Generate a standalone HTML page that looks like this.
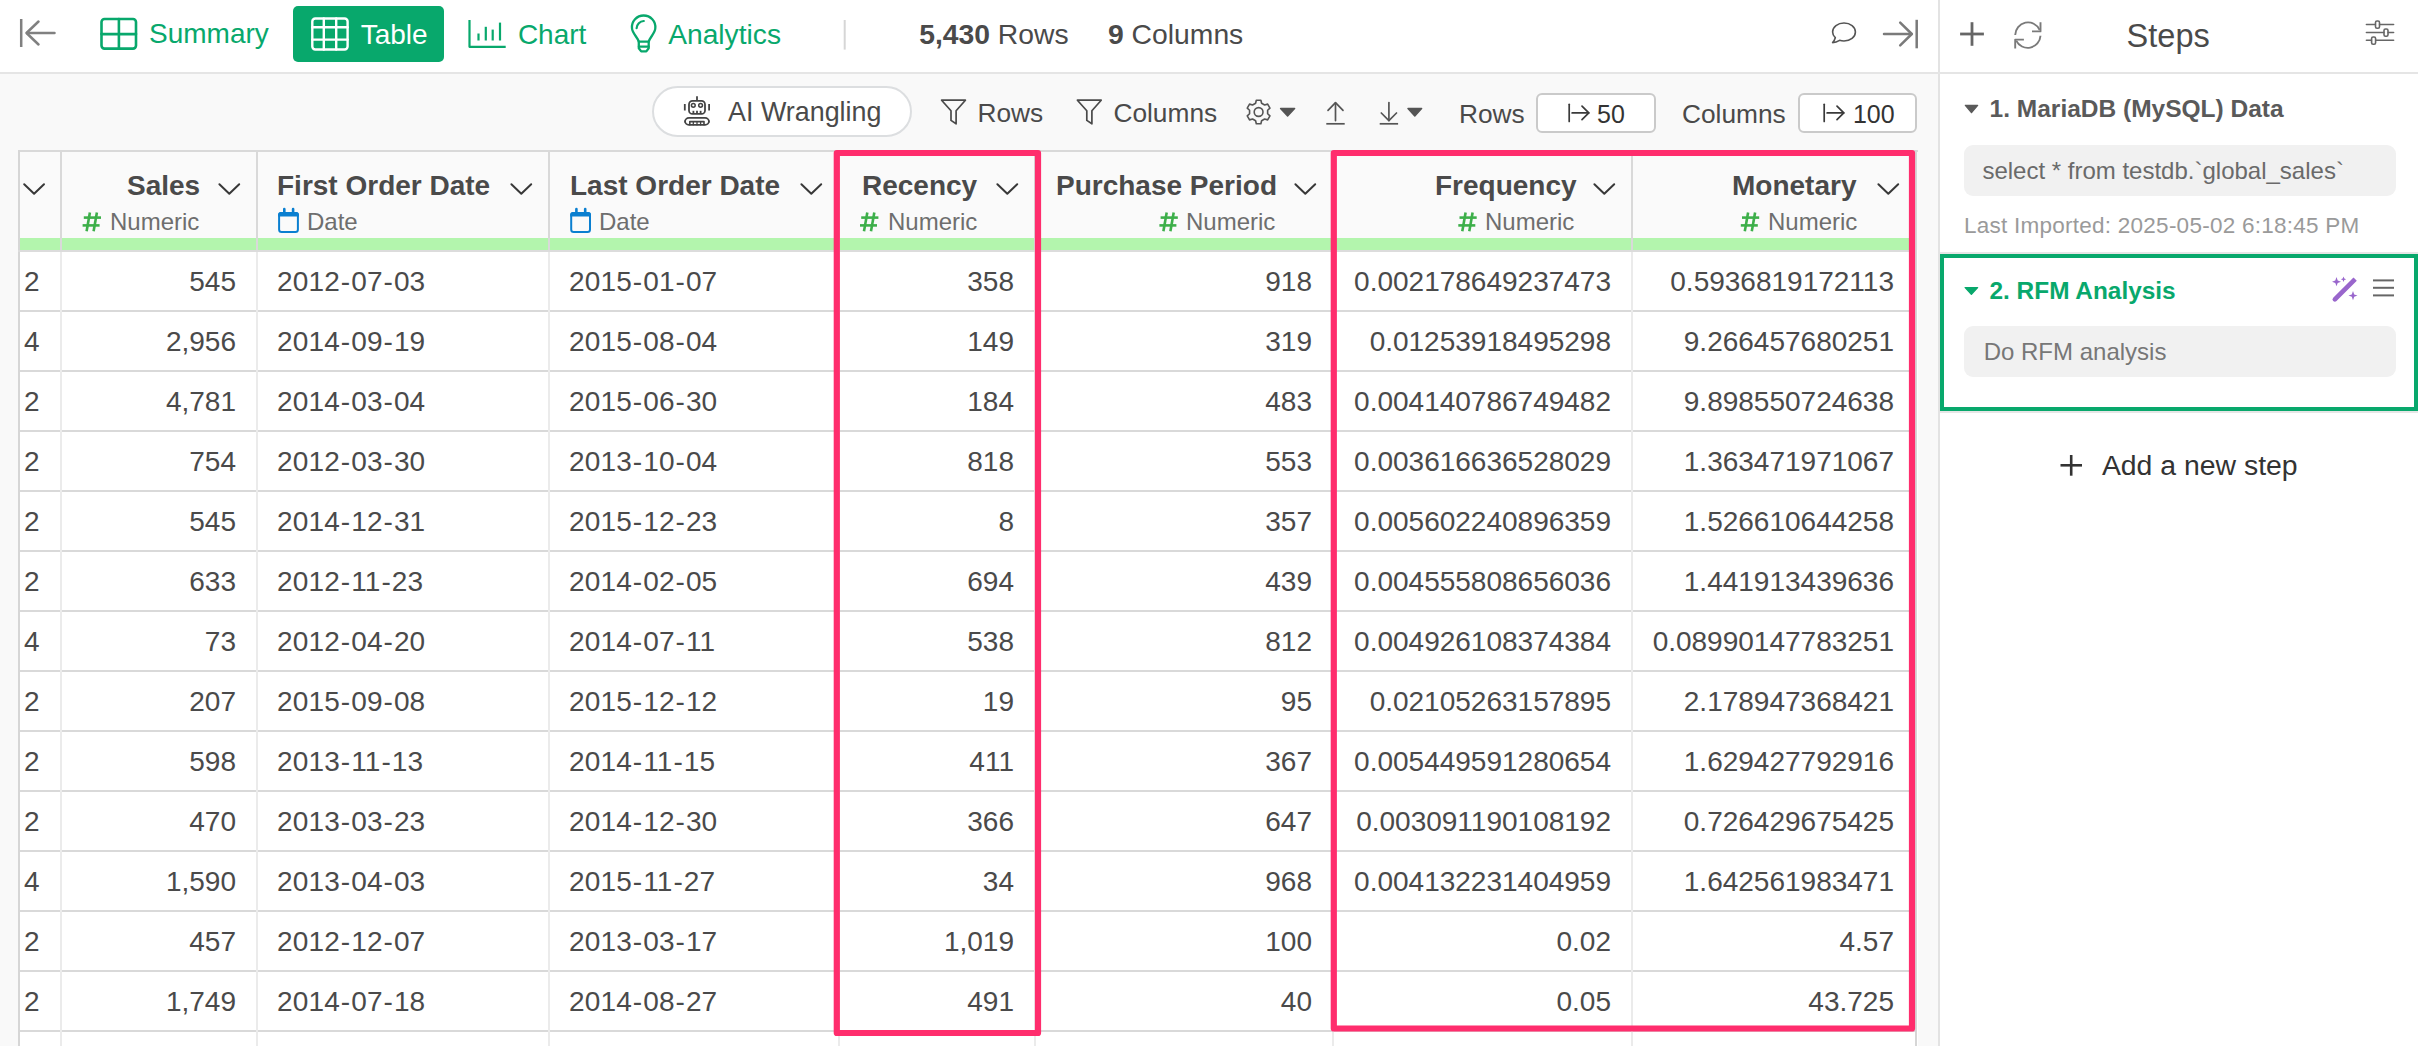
<!DOCTYPE html><html><head><meta charset="utf-8"><style>*{margin:0;padding:0;box-sizing:border-box}
html,body{width:2418px;height:1046px;overflow:hidden;background:#f9f9f9;font-family:"Liberation Sans",sans-serif;color:#4a4a4a;position:relative}
.t{position:absolute;line-height:1;white-space:nowrap}
.topbar{position:absolute;left:0;top:0;width:1938px;height:72px;background:#fff}
.topline{position:absolute;left:0;top:72px;width:2418px;height:2px;background:#e5e5e5}
.panel{position:absolute;left:1940px;top:0;width:478px;height:1046px;background:#fff}
.divider{position:absolute;left:1938px;top:0;width:2px;height:1046px;background:#e3e3e3}
.tbtn{position:absolute;left:293px;top:6px;width:151px;height:56px;background:#08a86c;border-radius:5px}
.tbl{position:absolute;left:0;top:0}
.hbg{position:absolute;left:18px;top:150px;width:1900px;height:88px;background:#fafafa;border-top:2px solid #d9d9d9}
.gbar{position:absolute;left:18px;top:238px;width:1897px;height:12px;background:#b3f5ad}
.rowbg{position:absolute;left:18px;top:250px;width:1900px;height:796px;background:#fff}
.rowline{position:absolute;left:18px;width:1897px;height:2px;background:#e2e2e2}
.vline{position:absolute;top:150px;width:2px;height:896px;background:#e6e6e6}
.c{position:absolute;font-size:28px;line-height:60px;height:60px;white-space:nowrap;color:#4a4a4a}
.c.r{text-align:right}
.ht{position:absolute;font-size:28px;font-weight:bold;line-height:1;white-space:nowrap;color:#4a4a4a}
.hs{position:absolute;font-size:24px;line-height:1;white-space:nowrap;color:#6e6e6e}
.pill{position:absolute;left:652px;top:86px;width:260px;height:51px;border:2px solid #dcdee0;border-radius:26px;background:#fff}
.inp{position:absolute;top:93px;height:40px;border:2px solid #cacaca;border-radius:6px;background:#fff}
.gbox{position:absolute;left:1964px;width:432px;background:#f1f1f1;border-radius:9px}
.stepbox{position:absolute;left:1940px;top:254px;width:478px;height:157px;border:4px solid #08a86c}
.icons{position:absolute;left:0;top:0;width:2418px;height:1046px;pointer-events:none}
.hy{margin:0 0.9px}
.rowline{background:#d9d9d9}
</style></head><body>
<div class="topbar"></div>
<div class="panel"></div>
<div class="divider"></div>
<div class="topline"></div>
<div class="tbtn"></div>
<div class="pill"></div>
<div class="inp" style="left:1536px;width:120px"></div>
<div class="inp" style="left:1798px;width:119px"></div>
<div class="rowbg"></div>

<div class="tbl">
<div class="hbg"></div>
<div class="gbar"></div>
<div class="rowline" style="top:310px"></div>
<div class="rowline" style="top:370px"></div>
<div class="rowline" style="top:430px"></div>
<div class="rowline" style="top:490px"></div>
<div class="rowline" style="top:550px"></div>
<div class="rowline" style="top:610px"></div>
<div class="rowline" style="top:670px"></div>
<div class="rowline" style="top:730px"></div>
<div class="rowline" style="top:790px"></div>
<div class="rowline" style="top:850px"></div>
<div class="rowline" style="top:910px"></div>
<div class="rowline" style="top:970px"></div>
<div class="rowline" style="top:1030px"></div>

<div class="c l" style="left:24px;top:251.5px">2</div>
<div class="c r" style="left:60px;width:176px;top:251.5px">545</div>
<div class="c l" style="left:277px;top:251.5px;letter-spacing:0.15px">2012<span class="hy">-</span>07<span class="hy">-</span>03</div>
<div class="c l" style="left:569px;top:251.5px;letter-spacing:0.15px">2015<span class="hy">-</span>01<span class="hy">-</span>07</div>
<div class="c r" style="left:838px;width:176px;top:251.5px">358</div>
<div class="c r" style="left:1034px;width:278px;top:251.5px">918</div>
<div class="c r" style="left:1332px;width:279px;top:251.5px">0.002178649237473</div>
<div class="c r" style="left:1631px;width:263px;top:251.5px">0.5936819172113</div>
<div class="c l" style="left:24px;top:311.5px">4</div>
<div class="c r" style="left:60px;width:176px;top:311.5px">2,956</div>
<div class="c l" style="left:277px;top:311.5px;letter-spacing:0.15px">2014<span class="hy">-</span>09<span class="hy">-</span>19</div>
<div class="c l" style="left:569px;top:311.5px;letter-spacing:0.15px">2015<span class="hy">-</span>08<span class="hy">-</span>04</div>
<div class="c r" style="left:838px;width:176px;top:311.5px">149</div>
<div class="c r" style="left:1034px;width:278px;top:311.5px">319</div>
<div class="c r" style="left:1332px;width:279px;top:311.5px">0.01253918495298</div>
<div class="c r" style="left:1631px;width:263px;top:311.5px">9.266457680251</div>
<div class="c l" style="left:24px;top:371.5px">2</div>
<div class="c r" style="left:60px;width:176px;top:371.5px">4,781</div>
<div class="c l" style="left:277px;top:371.5px;letter-spacing:0.15px">2014<span class="hy">-</span>03<span class="hy">-</span>04</div>
<div class="c l" style="left:569px;top:371.5px;letter-spacing:0.15px">2015<span class="hy">-</span>06<span class="hy">-</span>30</div>
<div class="c r" style="left:838px;width:176px;top:371.5px">184</div>
<div class="c r" style="left:1034px;width:278px;top:371.5px">483</div>
<div class="c r" style="left:1332px;width:279px;top:371.5px">0.004140786749482</div>
<div class="c r" style="left:1631px;width:263px;top:371.5px">9.898550724638</div>
<div class="c l" style="left:24px;top:431.5px">2</div>
<div class="c r" style="left:60px;width:176px;top:431.5px">754</div>
<div class="c l" style="left:277px;top:431.5px;letter-spacing:0.15px">2012<span class="hy">-</span>03<span class="hy">-</span>30</div>
<div class="c l" style="left:569px;top:431.5px;letter-spacing:0.15px">2013<span class="hy">-</span>10<span class="hy">-</span>04</div>
<div class="c r" style="left:838px;width:176px;top:431.5px">818</div>
<div class="c r" style="left:1034px;width:278px;top:431.5px">553</div>
<div class="c r" style="left:1332px;width:279px;top:431.5px">0.003616636528029</div>
<div class="c r" style="left:1631px;width:263px;top:431.5px">1.363471971067</div>
<div class="c l" style="left:24px;top:491.5px">2</div>
<div class="c r" style="left:60px;width:176px;top:491.5px">545</div>
<div class="c l" style="left:277px;top:491.5px;letter-spacing:0.15px">2014<span class="hy">-</span>12<span class="hy">-</span>31</div>
<div class="c l" style="left:569px;top:491.5px;letter-spacing:0.15px">2015<span class="hy">-</span>12<span class="hy">-</span>23</div>
<div class="c r" style="left:838px;width:176px;top:491.5px">8</div>
<div class="c r" style="left:1034px;width:278px;top:491.5px">357</div>
<div class="c r" style="left:1332px;width:279px;top:491.5px">0.005602240896359</div>
<div class="c r" style="left:1631px;width:263px;top:491.5px">1.526610644258</div>
<div class="c l" style="left:24px;top:551.5px">2</div>
<div class="c r" style="left:60px;width:176px;top:551.5px">633</div>
<div class="c l" style="left:277px;top:551.5px;letter-spacing:0.15px">2012<span class="hy">-</span>11<span class="hy">-</span>23</div>
<div class="c l" style="left:569px;top:551.5px;letter-spacing:0.15px">2014<span class="hy">-</span>02<span class="hy">-</span>05</div>
<div class="c r" style="left:838px;width:176px;top:551.5px">694</div>
<div class="c r" style="left:1034px;width:278px;top:551.5px">439</div>
<div class="c r" style="left:1332px;width:279px;top:551.5px">0.004555808656036</div>
<div class="c r" style="left:1631px;width:263px;top:551.5px">1.441913439636</div>
<div class="c l" style="left:24px;top:611.5px">4</div>
<div class="c r" style="left:60px;width:176px;top:611.5px">73</div>
<div class="c l" style="left:277px;top:611.5px;letter-spacing:0.15px">2012<span class="hy">-</span>04<span class="hy">-</span>20</div>
<div class="c l" style="left:569px;top:611.5px;letter-spacing:0.15px">2014<span class="hy">-</span>07<span class="hy">-</span>11</div>
<div class="c r" style="left:838px;width:176px;top:611.5px">538</div>
<div class="c r" style="left:1034px;width:278px;top:611.5px">812</div>
<div class="c r" style="left:1332px;width:279px;top:611.5px">0.004926108374384</div>
<div class="c r" style="left:1631px;width:263px;top:611.5px">0.08990147783251</div>
<div class="c l" style="left:24px;top:671.5px">2</div>
<div class="c r" style="left:60px;width:176px;top:671.5px">207</div>
<div class="c l" style="left:277px;top:671.5px;letter-spacing:0.15px">2015<span class="hy">-</span>09<span class="hy">-</span>08</div>
<div class="c l" style="left:569px;top:671.5px;letter-spacing:0.15px">2015<span class="hy">-</span>12<span class="hy">-</span>12</div>
<div class="c r" style="left:838px;width:176px;top:671.5px">19</div>
<div class="c r" style="left:1034px;width:278px;top:671.5px">95</div>
<div class="c r" style="left:1332px;width:279px;top:671.5px">0.02105263157895</div>
<div class="c r" style="left:1631px;width:263px;top:671.5px">2.178947368421</div>
<div class="c l" style="left:24px;top:731.5px">2</div>
<div class="c r" style="left:60px;width:176px;top:731.5px">598</div>
<div class="c l" style="left:277px;top:731.5px;letter-spacing:0.15px">2013<span class="hy">-</span>11<span class="hy">-</span>13</div>
<div class="c l" style="left:569px;top:731.5px;letter-spacing:0.15px">2014<span class="hy">-</span>11<span class="hy">-</span>15</div>
<div class="c r" style="left:838px;width:176px;top:731.5px">411</div>
<div class="c r" style="left:1034px;width:278px;top:731.5px">367</div>
<div class="c r" style="left:1332px;width:279px;top:731.5px">0.005449591280654</div>
<div class="c r" style="left:1631px;width:263px;top:731.5px">1.629427792916</div>
<div class="c l" style="left:24px;top:791.5px">2</div>
<div class="c r" style="left:60px;width:176px;top:791.5px">470</div>
<div class="c l" style="left:277px;top:791.5px;letter-spacing:0.15px">2013<span class="hy">-</span>03<span class="hy">-</span>23</div>
<div class="c l" style="left:569px;top:791.5px;letter-spacing:0.15px">2014<span class="hy">-</span>12<span class="hy">-</span>30</div>
<div class="c r" style="left:838px;width:176px;top:791.5px">366</div>
<div class="c r" style="left:1034px;width:278px;top:791.5px">647</div>
<div class="c r" style="left:1332px;width:279px;top:791.5px">0.003091190108192</div>
<div class="c r" style="left:1631px;width:263px;top:791.5px">0.726429675425</div>
<div class="c l" style="left:24px;top:851.5px">4</div>
<div class="c r" style="left:60px;width:176px;top:851.5px">1,590</div>
<div class="c l" style="left:277px;top:851.5px;letter-spacing:0.15px">2013<span class="hy">-</span>04<span class="hy">-</span>03</div>
<div class="c l" style="left:569px;top:851.5px;letter-spacing:0.15px">2015<span class="hy">-</span>11<span class="hy">-</span>27</div>
<div class="c r" style="left:838px;width:176px;top:851.5px">34</div>
<div class="c r" style="left:1034px;width:278px;top:851.5px">968</div>
<div class="c r" style="left:1332px;width:279px;top:851.5px">0.004132231404959</div>
<div class="c r" style="left:1631px;width:263px;top:851.5px">1.642561983471</div>
<div class="c l" style="left:24px;top:911.5px">2</div>
<div class="c r" style="left:60px;width:176px;top:911.5px">457</div>
<div class="c l" style="left:277px;top:911.5px;letter-spacing:0.15px">2012<span class="hy">-</span>12<span class="hy">-</span>07</div>
<div class="c l" style="left:569px;top:911.5px;letter-spacing:0.15px">2013<span class="hy">-</span>03<span class="hy">-</span>17</div>
<div class="c r" style="left:838px;width:176px;top:911.5px">1,019</div>
<div class="c r" style="left:1034px;width:278px;top:911.5px">100</div>
<div class="c r" style="left:1332px;width:279px;top:911.5px">0.02</div>
<div class="c r" style="left:1631px;width:263px;top:911.5px">4.57</div>
<div class="c l" style="left:24px;top:971.5px">2</div>
<div class="c r" style="left:60px;width:176px;top:971.5px">1,749</div>
<div class="c l" style="left:277px;top:971.5px;letter-spacing:0.15px">2014<span class="hy">-</span>07<span class="hy">-</span>18</div>
<div class="c l" style="left:569px;top:971.5px;letter-spacing:0.15px">2014<span class="hy">-</span>08<span class="hy">-</span>27</div>
<div class="c r" style="left:838px;width:176px;top:971.5px">491</div>
<div class="c r" style="left:1034px;width:278px;top:971.5px">40</div>
<div class="c r" style="left:1332px;width:279px;top:971.5px">0.05</div>
<div class="c r" style="left:1631px;width:263px;top:971.5px">43.725</div>
<div class="vline" style="left:18px;top:150px;height:896px;background:#d6d6d6"></div>
<div class="vline" style="left:60px;top:150px;height:100px;background:#d9d9d9"></div>
<div class="vline" style="left:60px;top:250px;height:796px;background:#ebebeb"></div>
<div class="vline" style="left:256px;top:150px;height:100px;background:#d9d9d9"></div>
<div class="vline" style="left:256px;top:250px;height:796px;background:#ebebeb"></div>
<div class="vline" style="left:548px;top:150px;height:100px;background:#d9d9d9"></div>
<div class="vline" style="left:548px;top:250px;height:796px;background:#ebebeb"></div>
<div class="vline" style="left:838px;top:150px;height:100px;background:#d9d9d9"></div>
<div class="vline" style="left:838px;top:250px;height:796px;background:#ebebeb"></div>
<div class="vline" style="left:1034px;top:150px;height:100px;background:#d9d9d9"></div>
<div class="vline" style="left:1034px;top:250px;height:796px;background:#ebebeb"></div>
<div class="vline" style="left:1332px;top:150px;height:100px;background:#d9d9d9"></div>
<div class="vline" style="left:1332px;top:250px;height:796px;background:#ebebeb"></div>
<div class="vline" style="left:1631px;top:150px;height:100px;background:#d9d9d9"></div>
<div class="vline" style="left:1631px;top:250px;height:796px;background:#ebebeb"></div>
<div class="vline" style="left:1915px;top:150px;height:896px;background:#d6d6d6"></div>
<div class="rowline" style="top:250px;background:#dcdcdc"></div>
<div class="ht" style="left:127px;top:172px">Sales</div>
<div class="hs" style="left:110px;top:210px">Numeric</div>
<div class="ht" style="left:277px;top:172px">First Order Date</div>
<div class="hs" style="left:307px;top:210px">Date</div>
<div class="ht" style="left:570px;top:172px">Last Order Date</div>
<div class="hs" style="left:599px;top:210px">Date</div>
<div class="ht" style="left:862px;top:172px">Recency</div>
<div class="hs" style="left:888px;top:210px">Numeric</div>
<div class="ht" style="left:1056px;top:172px">Purchase Period</div>
<div class="hs" style="left:1186px;top:210px">Numeric</div>
<div class="ht" style="left:1435px;top:172px">Frequency</div>
<div class="hs" style="left:1485px;top:210px">Numeric</div>
<div class="ht" style="left:1732px;top:172px">Monetary</div>
<div class="hs" style="left:1768px;top:210px">Numeric</div>

</div>
<div class="gbox" style="top:145px;height:51px"></div>
<div class="stepbox"></div>
<div class="gbox" style="top:326px;height:51px"></div>
<div style="position:absolute;left:1940px;top:252px;width:478px;height:2px;background:#e6e6e6"></div>
<div style="position:absolute;left:1940px;top:411px;width:478px;height:2px;background:#e6e6e6"></div>

<div class="t" style="left:149.0px;top:20.3px;font-size:28px;color:#08a86c">Summary</div>
<div class="t" style="left:360.7px;top:20.6px;font-size:28px;color:#fff">Table</div>
<div class="t" style="left:517.9px;top:20.6px;font-size:28px;color:#08a86c">Chart</div>
<div class="t" style="left:668.2px;top:20.1px;font-size:28.2px;color:#08a86c">Analytics</div>
<div class="t" style="left:919.2px;top:20.2px;font-size:28.3px;color:#4a4a4a"><b>5,430</b> Rows</div>
<div class="t" style="left:1108.0px;top:20.2px;font-size:28.3px;color:#4a4a4a"><b>9</b> Columns</div>
<div class="t" style="left:2126.6px;top:19.8px;font-size:32.5px;color:#4a4a4a">Steps</div>
<div class="t" style="left:728.0px;top:99.4px;font-size:26.9px;color:#4a4a4a">AI Wrangling</div>
<div class="t" style="left:977.5px;top:100.1px;font-size:26.3px;color:#4a4a4a">Rows</div>
<div class="t" style="left:1113.4px;top:100.1px;font-size:26.3px;color:#4a4a4a">Columns</div>
<div class="t" style="left:1458.9px;top:100.7px;font-size:26.3px;color:#4a4a4a">Rows</div>
<div class="t" style="left:1597.0px;top:101.8px;font-size:25px;color:#333">50</div>
<div class="t" style="left:1682.0px;top:100.7px;font-size:26.3px;color:#4a4a4a">Columns</div>
<div class="t" style="left:1852.9px;top:101.8px;font-size:25px;color:#333">100</div>
<div class="t" style="left:1989.6px;top:96.7px;font-size:24.5px;color:#5a5a5a;font-weight:bold">1. MariaDB (MySQL) Data</div>
<div class="t" style="left:1982.4px;top:158.6px;font-size:24px;color:#6a6a6a">select * from testdb.`global_sales`</div>
<div class="t" style="left:1964.0px;top:214.7px;font-size:22.5px;color:#9a9a9a;letter-spacing:0.25px">Last Imported: 2025-05-02 6:18:45 PM</div>
<div class="t" style="left:1989.5px;top:278.9px;font-size:24.4px;color:#08a86c;font-weight:bold">2. RFM Analysis</div>
<div class="t" style="left:1983.7px;top:339.7px;font-size:24px;color:#777">Do RFM analysis</div>
<div class="t" style="left:2101.9px;top:451.2px;font-size:28.4px;color:#333">Add a new step</div>
<svg class="icons" width="2418" height="1046" viewBox="0 0 2418 1046" fill="none" stroke-linecap="round" stroke-linejoin="round">
<!-- collapse left -->
<g stroke="#808080" stroke-width="2.5">
<line x1="21.2" y1="19" x2="21.2" y2="47" stroke-linecap="butt"/>
<line x1="27" y1="33" x2="54.5" y2="33"/>
<polyline points="38.5,21.5 26.5,33 38.5,44.5"/>
</g>
<!-- summary icon -->
<g stroke="#08a86c" stroke-width="2.6">
<rect x="101.5" y="19" width="34.5" height="29.6" rx="3"/>
<line x1="118.9" y1="19" x2="118.9" y2="48.6"/>
<line x1="101.5" y1="34.1" x2="136" y2="34.1"/>
</g>
<!-- table icon -->
<g stroke="#fff" stroke-width="2.4">
<rect x="312.3" y="18.5" width="35.3" height="31" rx="3"/>
<line x1="323.8" y1="18.5" x2="323.8" y2="49.5"/>
<line x1="336.2" y1="18.5" x2="336.2" y2="49.5"/>
<line x1="312.3" y1="27.2" x2="347.6" y2="27.2"/>
<line x1="312.3" y1="39.6" x2="347.6" y2="39.6"/>
</g>
<!-- chart icon -->
<g stroke="#08a86c" stroke-width="2.2" stroke-linecap="butt">
<polyline points="469.5,20 469.5,46.8 505.7,46.8"/>
<line x1="478.5" y1="33.5" x2="478.5" y2="40.5"/>
<line x1="485.8" y1="26.8" x2="485.8" y2="40.5"/>
<line x1="492.7" y1="29.6" x2="492.7" y2="40.5"/>
<line x1="500" y1="22.6" x2="500" y2="40.5"/>
</g>
<!-- bulb -->
<g stroke="#08a86c" stroke-width="2.3">
<path d="M638.8,41.6 C637.8,37.6 632.2,33.2 632,28.3 A11.7,11.7 0 1 1 655.3,28.3 C655.1,33.2 649.7,37.6 648.7,41.6 Z"/>
<path d="M638.8,41.6 L638.8,48.2 L641.2,51.4 L646.3,51.4 L648.7,48.2 L648.7,41.6"/>
<line x1="638.8" y1="46.6" x2="648.7" y2="46.6" stroke-width="2.1"/>
<path d="M636.6,28.2 A7.6,7.6 0 0 1 643.8,21" stroke-width="2.2"/>
</g>
<line x1="844.7" y1="20" x2="844.7" y2="49.6" stroke="#d6d6d6" stroke-width="2" stroke-linecap="butt"/>
<!-- comment -->
<path d="M1835.3,37.7 C1833,35.5 1832.6,33.6 1832.6,32 C1832.6,26.8 1837.8,23 1844,23 C1850.3,23 1855.4,26.8 1855.4,32 C1855.4,37.2 1850.3,41 1844,41 C1842.3,41 1841,40.8 1839.6,40.3 C1837.5,41.7 1835,42.6 1832.6,42.6 C1833.9,41.2 1834.8,39.6 1835.3,37.7 Z" stroke="#555" stroke-width="1.6"/>
<!-- expand right -->
<g stroke="#7a7a7a" stroke-width="2.5">
<line x1="1884" y1="34" x2="1911.5" y2="34"/>
<polyline points="1900.2,22.6 1911.8,34 1900.2,45.4"/>
<line x1="1916.7" y1="19.8" x2="1916.7" y2="48.3" stroke-linecap="butt"/>
</g>
<!-- plus -->
<g stroke="#666" stroke-width="2.8" stroke-linecap="butt">
<line x1="1972" y1="22.2" x2="1972" y2="45.8"/>
<line x1="1960.1" y1="34" x2="1983.9" y2="34"/>
</g>
<!-- refresh -->
<g stroke="#7a7a7a" stroke-width="1.9" stroke-linecap="butt">
<path d="M2015.2,35 A12.8,12.8 0 0 1 2039.6,29.8"/>
<polyline points="2040.5,22.2 2040.5,31.4 2032,31.4"/>
<path d="M2040.5,35.8 A12.8,12.8 0 0 1 2016.2,40.6"/>
<polyline points="2015.2,48.5 2015.2,39.6 2023.9,39.6"/>
</g>
<!-- sliders -->
<g stroke="#666" stroke-width="1.6">
<line x1="2366.4" y1="24.5" x2="2375.3" y2="24.5"/><line x1="2379.6" y1="24.5" x2="2393.6" y2="24.5"/>
<line x1="2366.4" y1="32.5" x2="2383.8" y2="32.5"/><line x1="2388.2" y1="32.5" x2="2393.6" y2="32.5"/>
<line x1="2366.4" y1="40.3" x2="2371.4" y2="40.3"/><line x1="2375.8" y1="40.3" x2="2393.6" y2="40.3"/>
<rect x="2375.5" y="21" width="4" height="7.2" rx="1.5"/>
<rect x="2384" y="29" width="4" height="7.2" rx="1.5"/>
<rect x="2371.6" y="37" width="4" height="7.2" rx="1.5"/>
</g>
<!-- robot -->
<g stroke="#444" stroke-width="1.8">
<line x1="697" y1="96.3" x2="697" y2="100" stroke-linecap="butt"/>
<rect x="689" y="100.9" width="16" height="13" rx="3.5"/>
<circle cx="693.3" cy="105.3" r="1.9" stroke-width="1.5"/>
<circle cx="700.6" cy="105.3" r="1.9" stroke-width="1.5"/>
<line x1="693.4" y1="110.8" x2="693.4" y2="113.9" stroke-linecap="butt"/>
<line x1="697" y1="110.8" x2="697" y2="113.9" stroke-linecap="butt"/>
<line x1="700.6" y1="110.8" x2="700.6" y2="113.9" stroke-linecap="butt"/>
<line x1="684.8" y1="104" x2="684.8" y2="110.5" stroke-linecap="butt"/>
<line x1="709.1" y1="104" x2="709.1" y2="110.5" stroke-linecap="butt"/>
<path d="M689,117.9 L705,117.9 A4,4 0 0 1 709,121.9 L709,121 A3.8,3.8 0 0 1 705.2,124.8 L688.8,124.8 A3.8,3.8 0 0 1 685,121 L685,121.9 A4,4 0 0 1 689,117.9 Z"/>
<path d="M689.8,124.8 L689.8,121.6 L704,121.6 L704,124.8" stroke-width="1.6"/><line x1="693.3" y1="121.6" x2="693.3" y2="124.8" stroke-width="1.3"/><line x1="697" y1="121.6" x2="697" y2="124.8" stroke-width="1.3"/><line x1="700.6" y1="121.6" x2="700.6" y2="124.8" stroke-width="1.3"/>
</g>
<!-- funnels -->
<g stroke="#4a4a4a" stroke-width="1.7">
<path d="M941.6,100.2 L965.4,100.2 L956.1,110.8 L956.1,123.8 L951,120.4 L951,110.8 Z"/>
<path d="M1077.4,100.2 L1101.2,100.2 L1091.9,110.8 L1091.9,123.8 L1086.8,120.4 L1086.8,110.8 Z"/>
</g>
<!-- gear -->
<g stroke="#555" stroke-width="1.6">
<path d="M1255.60,103.30 L1256.31,100.22 L1260.89,100.22 L1261.60,103.30 L1264.64,105.06 L1267.66,104.13 L1269.95,108.09 L1267.63,110.24 L1267.63,113.76 L1269.95,115.91 L1267.66,119.87 L1264.64,118.94 L1261.60,120.70 L1260.89,123.78 L1256.31,123.78 L1255.60,120.70 L1252.56,118.94 L1249.54,119.87 L1247.25,115.91 L1249.57,113.76 L1249.57,110.24 L1247.25,108.09 L1249.54,104.13 L1252.56,105.06 Z"/>
<circle cx="1258.6" cy="112" r="4.4"/>
</g>
<g fill="#555" stroke="#555" stroke-width="1.5">
<path d="M1280.6,108.6 L1294.6,108.6 L1287.6,116 Z"/>
<path d="M1408,108.6 L1421.6,108.6 L1414.8,116 Z"/>
</g>
<g stroke="#555" stroke-width="1.7">
<line x1="1335.5" y1="103" x2="1335.5" y2="120.6"/>
<polyline points="1328,110.4 1335.5,102.6 1343,110.4"/>
<line x1="1326.3" y1="123.8" x2="1344.7" y2="123.8" stroke-linecap="butt"/>
<line x1="1388.9" y1="102.5" x2="1388.9" y2="120.4"/>
<polyline points="1381.3,113 1388.9,120.6 1396.5,113"/>
<line x1="1379.7" y1="123.8" x2="1398.1" y2="123.8" stroke-linecap="butt"/>
</g>
<!-- |-> in inputs -->
<g stroke="#3a3a3a" stroke-width="1.7">
<line x1="1569.2" y1="104.3" x2="1569.2" y2="121.5"/>
<line x1="1572.2" y1="112.9" x2="1588.6" y2="112.9" stroke-width="1.9"/>
<polyline points="1582,106.1 1588.8,112.9 1582,119.6"/>
<line x1="1824.2" y1="104.3" x2="1824.2" y2="121.5"/>
<line x1="1827.2" y1="112.9" x2="1843.6" y2="112.9" stroke-width="1.9"/>
<polyline points="1837,106.1 1843.8,112.9 1837,119.6"/>
</g>
<!-- chevrons header -->
<g stroke="#383838" stroke-width="2"><polyline points="24.2,184.3 34.1,193.8 44.0,184.3"/><polyline points="219.4,184.3 229.3,193.8 239.2,184.3"/><polyline points="511.4,184.3 521.3,193.8 531.2,184.3"/><polyline points="801.4,184.3 811.3,193.8 821.2,184.3"/><polyline points="997.4,184.3 1007.3,193.8 1017.2,184.3"/><polyline points="1295.4,184.3 1305.3,193.8 1315.2,184.3"/><polyline points="1594.4,184.3 1604.3,193.8 1614.2,184.3"/><polyline points="1878.4,184.3 1888.3,193.8 1898.2,184.3"/></g>
<!-- hashes -->
<g stroke="#3daf4a" stroke-width="2.6" stroke-linecap="butt"><line x1="89.9" y1="212.6" x2="86.6" y2="231.2"/><line x1="96.9" y1="212.6" x2="93.6" y2="231.2"/><line x1="83.8" y1="217.6" x2="101.0" y2="217.6"/><line x1="82.6" y1="225.4" x2="99.6" y2="225.4"/><line x1="867.3" y1="212.6" x2="864.0" y2="231.2"/><line x1="874.3" y1="212.6" x2="871.0" y2="231.2"/><line x1="861.2" y1="217.6" x2="878.4" y2="217.6"/><line x1="860.0" y1="225.4" x2="877.0" y2="225.4"/><line x1="1166.7" y1="212.6" x2="1163.4" y2="231.2"/><line x1="1173.7" y1="212.6" x2="1170.4" y2="231.2"/><line x1="1160.6" y1="217.6" x2="1177.8" y2="217.6"/><line x1="1159.4" y1="225.4" x2="1176.4" y2="225.4"/><line x1="1465.6" y1="212.6" x2="1462.3" y2="231.2"/><line x1="1472.6" y1="212.6" x2="1469.3" y2="231.2"/><line x1="1459.5" y1="217.6" x2="1476.7" y2="217.6"/><line x1="1458.3" y1="225.4" x2="1475.3" y2="225.4"/><line x1="1748.1" y1="212.6" x2="1744.8" y2="231.2"/><line x1="1755.1" y1="212.6" x2="1751.8" y2="231.2"/><line x1="1742.0" y1="217.6" x2="1759.2" y2="217.6"/><line x1="1740.8" y1="225.4" x2="1757.8" y2="225.4"/></g>
<!-- calendars -->
<g stroke="#0a7fd0" fill="none"><rect x="279.1" y="213" width="18.8" height="18.9" rx="2.5" stroke-width="2"/><path d="M278.1,216.5 L278.1,214.5 Q278.1,212 280.6,212 L296.4,212 Q298.9,212 298.9,214.5 L298.9,216.5 Z" fill="#0a7fd0" stroke="none"/><line x1="284.3" y1="209" x2="284.3" y2="213" stroke-width="2.6" stroke-linecap="round"/><line x1="293.1" y1="209" x2="293.1" y2="213" stroke-width="2.6" stroke-linecap="round"/><rect x="571.2" y="213" width="18.8" height="18.9" rx="2.5" stroke-width="2"/><path d="M570.2,216.5 L570.2,214.5 Q570.2,212 572.7,212 L588.5,212 Q591.0,212 591.0,214.5 L591.0,216.5 Z" fill="#0a7fd0" stroke="none"/><line x1="576.4" y1="209" x2="576.4" y2="213" stroke-width="2.6" stroke-linecap="round"/><line x1="585.2" y1="209" x2="585.2" y2="213" stroke-width="2.6" stroke-linecap="round"/></g>
<!-- pink boxes -->
<rect x="836.8" y="153" width="201.2" height="880" rx="0" stroke="#ff2d6d" stroke-width="6.2" stroke-linejoin="round"/>
<rect x="1333.8" y="153" width="578.2" height="875.5" rx="0" stroke="#ff2d6d" stroke-width="6.2" stroke-linejoin="round"/>
<!-- panel carets -->
<path d="M1965.4,105.4 L1977.6,105.4 L1971.5,112.6 Z" fill="#5a5a5a" stroke="#5a5a5a" stroke-width="1.4"/>
<path d="M1965.2,287.6 L1977.6,287.6 L1971.4,294.2 Z" fill="#08a86c" stroke="#08a86c" stroke-width="1.4"/>
<!-- wand -->
<g fill="#9966cc">
<path d="M2353.5,277.5 L2356.8,280.8 L2336.5,301 A2.3,2.3 0 0 1 2333.2,297.7 Z"/>
<path d="M2336.5,277 L2337.7,280.5 L2341,281.7 L2337.7,282.9 L2336.5,286.3 L2335.3,282.9 L2332,281.7 L2335.3,280.5 Z"/>
<path d="M2343.5,276.5 L2344.3,278.4 L2346.2,279.2 L2344.3,280 L2343.5,281.9 L2342.7,280 L2340.8,279.2 L2342.7,278.4 Z"/>
<path d="M2353,291 L2354.2,294.4 L2357.5,295.6 L2354.2,296.8 L2353,300.2 L2351.8,296.8 L2348.5,295.6 L2351.8,294.4 Z"/>
</g>
<!-- hamburger -->
<g stroke="#666" stroke-width="2" stroke-linecap="butt">
<line x1="2373" y1="280.4" x2="2394" y2="280.4"/>
<line x1="2373" y1="287.8" x2="2394" y2="287.8"/>
<line x1="2373" y1="295.4" x2="2394" y2="295.4"/>
</g>
<!-- add step plus -->
<g stroke="#333" stroke-width="2.6" stroke-linecap="butt">
<line x1="2071.2" y1="455" x2="2071.2" y2="475.7"/>
<line x1="2060.5" y1="465.3" x2="2082" y2="465.3"/>
</g>
</svg>
</body></html>
